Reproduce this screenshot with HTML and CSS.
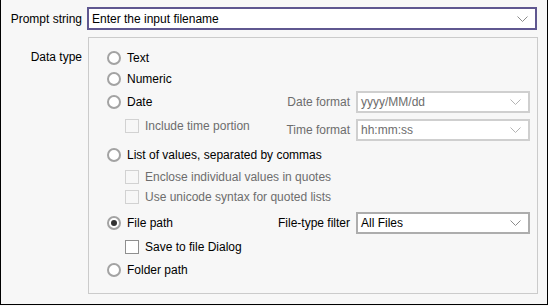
FILE: index.html
```html
<!DOCTYPE html>
<html>
<head>
    <meta charset="UTF-8">
    <link rel="stylesheet" href="styles.css">
</head>
<body>
<div class="window">
    <div class="prompt-row">
        <div class="label">Prompt string</div>
        <div class="combo main">
            <span>Enter the input filename</span>
            <svg class="chev" width="11" height="6" viewBox="0 0 11 6"><polyline points="0.5,0.5 5.5,5.5 10.5,0.5" fill="none" stroke="#8c8c8c" stroke-width="1"/></svg>
        </div>
    </div>
    <div class="type-row">
        <div class="label type-label">Data type</div>
        <div class="group">
            <div class="row r-text"><div class="opt"><span class="radio"></span>Text</div></div>
            <div class="row r-num"><div class="opt"><span class="radio"></span>Numeric</div></div>
            <div class="row r-date">
                <div class="opt"><span class="radio"></span>Date</div>
                <div class="field off">
                    <span class="flabel">Date format</span>
                    <div class="combo off"><span>yyyy/MM/dd</span><svg class="chev" width="11" height="6" viewBox="0 0 11 6"><polyline points="0.5,0.5 5.5,5.5 10.5,0.5" fill="none" stroke="#b4b4b4" stroke-width="1"/></svg></div>
                </div>
            </div>
            <div class="row r-time">
                <div class="opt sub off up"><span class="check"></span>Include time portion</div>
                <div class="field off">
                    <span class="flabel">Time format</span>
                    <div class="combo off"><span>hh:mm:ss</span><svg class="chev" width="11" height="6" viewBox="0 0 11 6"><polyline points="0.5,0.5 5.5,5.5 10.5,0.5" fill="none" stroke="#b4b4b4" stroke-width="1"/></svg></div>
                </div>
            </div>
            <div class="row r-list"><div class="opt"><span class="radio"></span>List of values, separated by commas</div></div>
            <div class="row r-encl"><div class="opt sub off"><span class="check"></span>Enclose individual values in quotes</div></div>
            <div class="row r-uni"><div class="opt sub off"><span class="check"></span>Use unicode syntax for quoted lists</div></div>
            <div class="row r-file">
                <div class="opt"><span class="radio on"></span>File path</div>
                <div class="field">
                    <span class="flabel">File-type filter</span>
                    <div class="combo"><span>All Files</span><svg class="chev" width="11" height="6" viewBox="0 0 11 6"><polyline points="0.5,0.5 5.5,5.5 10.5,0.5" fill="none" stroke="#8c8c8c" stroke-width="1"/></svg></div>
                </div>
            </div>
            <div class="row r-save"><div class="opt sub"><span class="check"></span>Save to file Dialog</div></div>
            <div class="row r-folder"><div class="opt"><span class="radio"></span>Folder path</div></div>
        </div>
    </div>
</div>
</body>
</html>
```

FILE: styles.css
```css
html, body { margin: 0; padding: 0; }
body { width: 548px; height: 306px; background: #f7f7f7; font-family: "Liberation Sans", Arial, sans-serif; font-size: 12px; color: #000; }
.window { box-sizing: border-box; width: 548px; height: 305px; border: 1px solid #000; border-top: none; }
.label { width: 81px; text-align: right; flex: none; }
.prompt-row { display: flex; align-items: center; gap: 5px; padding-top: 7px; }
.type-row { display: flex; align-items: flex-start; gap: 6px; margin-top: 7px; }
.type-label { padding-top: 13px; }
.combo { box-sizing: border-box; height: 22px; width: 174px; display: flex; align-items: center; justify-content: space-between; border: 2px solid #adadad; background: #fff; padding: 0 7px 0 3px; }
.combo.main { width: 450px; height: 23px; border-color: #5f5790; }
.combo.off { border-color: #cfcfcf; color: #6d6d6d; }
.chev { flex: none; }
.group { box-sizing: border-box; width: 450px; height: 257px; border: 1px solid #cbcbcb; padding: 10px 7px 0 18px; }
.row { display: flex; align-items: center; justify-content: space-between; height: 20px; }
.r-num { margin-top: 1px; }
.r-date { height: 22px; margin-top: 2px; }
.r-time { height: 22px; margin-top: 6px; }
.r-list { margin-top: 4px; }
.r-encl { margin-top: 2px; }
.r-file { height: 22px; margin-top: 5px; }
.r-save { margin-top: 3px; }
.r-folder { margin-top: 3px; }
.opt { display: flex; align-items: center; gap: 6px; }
.opt.sub { margin-left: 18px; }
.opt.up { margin-bottom: 8px; }
.off { color: #6d6d6d; }
.field { display: flex; align-items: center; gap: 6px; }
.radio { box-sizing: border-box; width: 14px; height: 14px; border: 2px solid #a3a3a3; border-radius: 50%; background: #fff; display: flex; align-items: center; justify-content: center; }
.radio.on::after { content: ""; width: 6px; height: 6px; border-radius: 50%; background: #333; }
.check { box-sizing: border-box; width: 14px; height: 14px; border: 1px solid #8f8f8f; background: #fff; }
.off .check { border-color: #d2d2d2; background: #f7f7f7; }
```
